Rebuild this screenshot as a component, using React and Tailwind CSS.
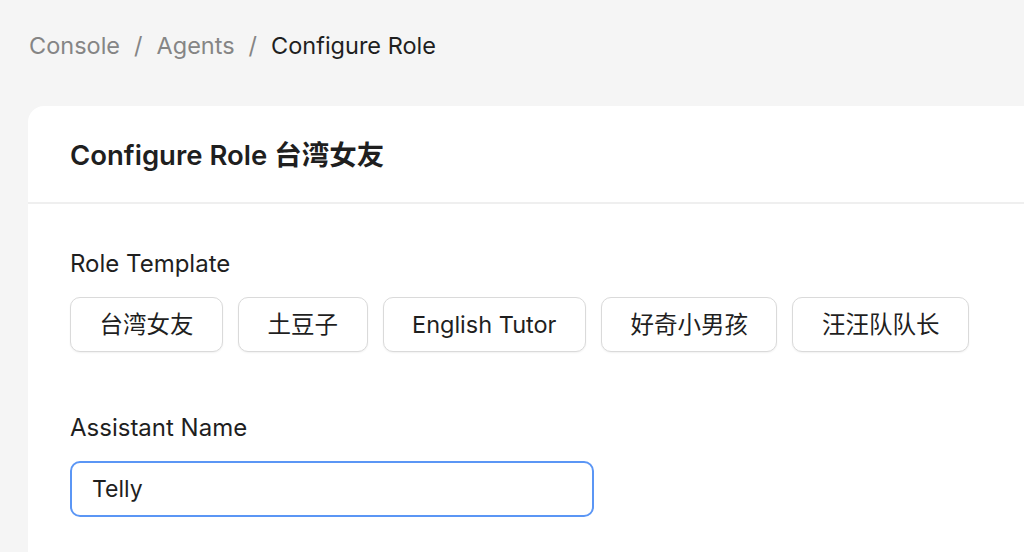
import React from 'react';

const templates = ['台湾女友', '土豆子', 'English Tutor', '好奇小男孩', '汪汪队队长'];

const font = { fontFamily: 'Inter, "Noto Sans CJK SC", sans-serif' };

const App = () => {
  return (
    <div
      className="h-[552px] w-full overflow-hidden bg-[#f5f5f5] pl-[28px] pt-[30px] text-[#1f1f1f]"
      style={font}
    >
      <nav className="flex items-center gap-[14px] pl-[1px] text-[23.5px] leading-[32px]">
        <span className="text-[#858585]">Console</span>
        <span className="text-[#858585]">/</span>
        <span className="text-[#858585]">Agents</span>
        <span className="text-[#858585]">/</span>
        <span className="text-[#1f1f1f]">Configure Role</span>
      </nav>

      <div className="mt-[44px] w-[1100px] rounded-[16px] bg-white">
        <div className="flex h-[98px] items-center border-b-2 border-[#efefef] px-[42px] pt-[2px]">
          <h1 className="text-[27.5px] font-semibold leading-[34px] text-[#1f1f1f]">Configure Role 台湾女友</h1>
        </div>

        <div className="px-[42px] pt-[44px] pb-[80px]">
          <div className="text-[24px] leading-[32px]">Role Template</div>
          <div className="mt-[17px] flex gap-[15px]">
            {templates.map((t) => (
              <button
                key={t}
                type="button"
                className="h-[55px] rounded-[10px] border-[1.5px] border-[#dadada] bg-white px-[28.5px] text-[23.5px] text-[#1f1f1f] shadow-[0_1px_2px_rgba(0,0,0,0.06)]"
              >
                {t}
              </button>
            ))}
          </div>

          <div className="mt-[60px] text-[24px] leading-[32px]">Assistant Name</div>
          <input
            defaultValue="Telly"
            className="mt-[17px] block h-[56px] w-[524px] rounded-[10px] border-2 border-[#5b96f5] bg-white px-[20px] text-[23px] text-[#1f1f1f] outline-none"
          />
        </div>
      </div>
    </div>
  );
};

export default App;
